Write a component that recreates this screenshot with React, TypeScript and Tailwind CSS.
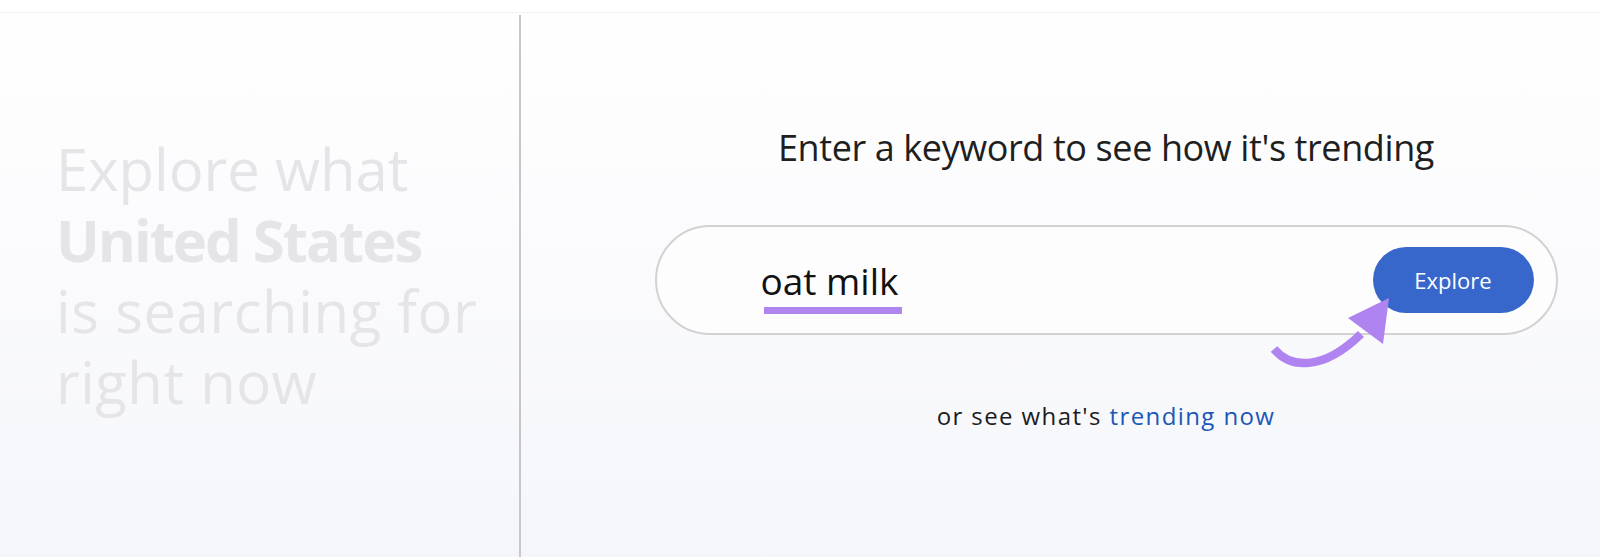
import React from "react";

export default function App() {
  const font = { fontFamily: '"Open Sans", "Roboto", sans-serif' };
  return (
    <div
      className="relative w-[1600px] h-[557px] overflow-hidden bg-gradient-to-b from-[#ffffff] to-[#f5f6fa] flex flex-col"
      style={font}
    >
      <div className="h-[13px] bg-white border-b border-[#f1f1f3]" />
      <div className="flex flex-1">
        <div className="w-[519px] pl-[56px] pt-[120px]">
          <div className="text-[58px] leading-[71px] text-[#e5e5e7]">
            <div>Explore what</div>
            <div className="font-bold tracking-[-2px]">United States</div>
            <div className="tracking-[0.6px]">is searching for</div>
            <div className="tracking-[0.5px]">right now</div>
          </div>
        </div>
        <div className="w-[2px] bg-[#c7c7ca] mt-[2px]" />
        <div className="flex-1 flex flex-col items-center pl-[91px] pt-[113px]">
          <div className="text-[36px] leading-[44px] tracking-[-0.4px] text-[#1f1f1f]">
            Enter a keyword to see how it's trending
          </div>
          <div className="mt-[55px] w-[903px] h-[110px] shrink-0 rounded-full border-2 border-[#d2d2d4] bg-[#fdfdfe] flex items-center pl-[104px] pr-[22px]">
            <div className="flex-1 flex flex-col items-start mt-[13px]">
              <div className="text-[37px] leading-[44px] text-[#111111]">oat milk</div>
              <div className="mt-[4px] ml-[3px] w-[138px] h-[7px] bg-[#ae86ee]" />
            </div>
            <div className="w-[161px] h-[66px] rounded-full bg-[#3867cc] flex items-center justify-center text-white text-[22px] font-medium">
              Explore
            </div>
          </div>
          <div className="mt-[66px] text-[24px] leading-[30px] tracking-[1.4px] text-[#1c1c1c]">
            or see what's <span className="text-[#1b57b7]">trending now</span>
          </div>
        </div>
      </div>
      <svg
        className="absolute left-[1260px] top-[288px]"
        width="140"
        height="92"
        viewBox="0 0 140 92"
      >
        <path
          d="M14 61 C 30 80, 62 84, 101 46"
          fill="none"
          stroke="#b084f0"
          strokeWidth="8.5"
        />
        <polygon points="88,30 129,10 123,56" fill="#b084f0" />
      </svg>
    </div>
  );
}
